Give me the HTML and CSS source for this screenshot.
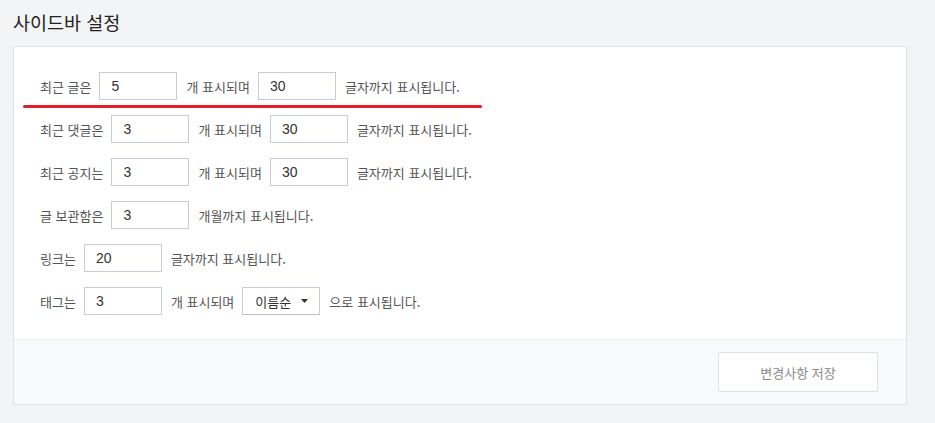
FILE: index.html
```
<!DOCTYPE html>
<html lang="ko">
<head>
<meta charset="utf-8">
<link rel="stylesheet" href="styles.css">
</head>
<body>
<h2 class="page-title">사이드바 설정</h2>
<div class="card">
  <div class="card-body">
    <div class="row">
      <span class="label">최근 글은</span>
      <input class="field" type="text" value="5">
      <span class="label">개 표시되며</span>
      <input class="field" type="text" value="30">
      <span class="label">글자까지 표시됩니다.</span>
    </div>
    <div class="row">
      <span class="label">최근 댓글은</span>
      <input class="field" type="text" value="3">
      <span class="label">개 표시되며</span>
      <input class="field" type="text" value="30">
      <span class="label">글자까지 표시됩니다.</span>
    </div>
    <div class="row">
      <span class="label">최근 공지는</span>
      <input class="field" type="text" value="3">
      <span class="label">개 표시되며</span>
      <input class="field" type="text" value="30">
      <span class="label">글자까지 표시됩니다.</span>
    </div>
    <div class="row">
      <span class="label">글 보관함은</span>
      <input class="field" type="text" value="3">
      <span class="label">개월까지 표시됩니다.</span>
    </div>
    <div class="row">
      <span class="label">링크는</span>
      <input class="field" type="text" value="20">
      <span class="label">글자까지 표시됩니다.</span>
    </div>
    <div class="row">
      <span class="label">태그는</span>
      <input class="field" type="text" value="3">
      <span class="label">개 표시되며</span>
      <div class="select">
        <span class="select-text">이름순</span>
        <svg class="caret" width="7" height="4" viewBox="0 0 7 4"><path d="M0 0H7L3.5 4Z" fill="#333"/></svg>
      </div>
      <span class="label">으로 표시됩니다.</span>
    </div>
    <div class="highlight"></div>
  </div>
  <div class="card-footer">
    <button class="save-btn" type="button">변경사항 저장</button>
  </div>
</div>
</body>
</html>
```
FILE: styles.css
```
html, body {
  margin: 0;
  padding: 0;
}
body {
  background: #f3f4f6;
  font-family: "Noto Sans CJK KR", "Noto Sans", sans-serif;
  color: #333;
  width: 935px;
  height: 423px;
  overflow: hidden;
}
.page-title {
  margin: 0;
  padding: 10px 0 0 13px;
  font-size: 18.5px;
  line-height: 24px;
  font-weight: 400;
  color: #222;
}
.card {
  margin: 12px 0 0 13px;
  width: 892px;
  background: #fff;
  border: 1px solid #dde1e8;
}
.card-body {
  position: relative;
  padding: 25px 26px 24px;
  display: flex;
  flex-direction: column;
  gap: 15px;
}
.row {
  display: flex;
  align-items: center;
  height: 28px;
}
.label {
  font-size: 13px;
  color: #555;
  white-space: nowrap;
}
.field {
  box-sizing: border-box;
  width: 78px;
  height: 28px;
  margin: 0 9px 0 8px;
  padding: 0 11px;
  border: 1px solid #c6cdd7;
  border-radius: 0;
  font-family: "Liberation Sans", "Noto Sans CJK KR", sans-serif;
  font-size: 14px;
  color: #333;
  background: #fff;
  outline: none;
}
.select {
  box-sizing: border-box;
  width: 78px;
  height: 28px;
  margin: 0 9px 0 8px;
  padding: 0 11px 0 12px;
  border: 1px solid #c6cdd7;
  border-bottom-color: #b9c0ca;
  display: flex;
  align-items: center;
  justify-content: space-between;
  background: #fff;
}
.select-text {
  font-size: 13px;
  color: #333;
}
.caret {
  display: block;
}
.highlight {
  position: absolute;
  left: 9px;
  top: 58px;
  width: 459px;
  height: 3px;
  border-radius: 2px;
  background: #e21f26;
}
.card-footer {
  border-top: 1px solid #eceef2;
  background: #f8f9fb;
  padding: 12px 28px 12px;
  display: flex;
  justify-content: flex-end;
}
.save-btn {
  width: 160px;
  height: 40px;
  background: #fff;
  border: 1px solid #dde1ea;
  border-radius: 0;
  font-family: "Noto Sans CJK KR", sans-serif;
  font-size: 13px;
  color: #8a8a8a;
  padding: 0;
}
```
